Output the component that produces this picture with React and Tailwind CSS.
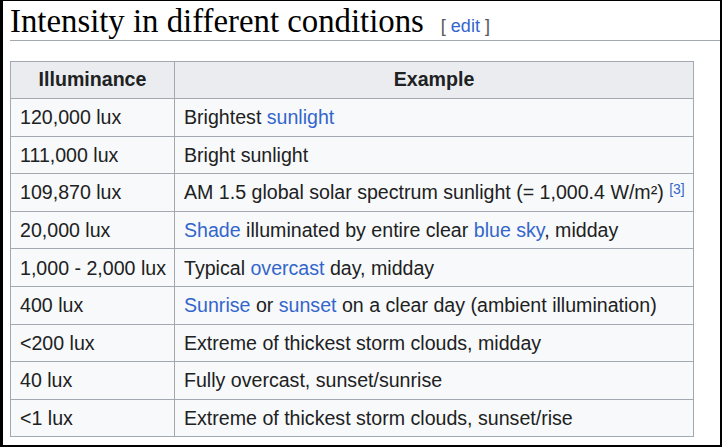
export default function App() {
  const link = "text-[#3366cc]";
  const rows = [
    ["120,000 lux", <>Brightest <span className={link}>sunlight</span></>],
    ["111,000 lux", <>Bright sunlight</>],
    ["109,870 lux", <>AM 1.5 global solar spectrum sunlight (= 1,000.4 W/m²) <sup className={`${link} text-[14px] relative -top-[5px]`}>[3]</sup></>],
    ["20,000 lux", <><span className={link}>Shade</span> illuminated by entire clear <span className={link}>blue sky</span>, midday</>],
    ["1,000 - 2,000 lux", <>Typical <span className={link}>overcast</span> day, midday</>],
    ["400 lux", <><span className={link}>Sunrise</span> or <span className={link}>sunset</span> on a clear day (ambient illumination)</>],
    ["<200 lux", <>Extreme of thickest storm clouds, midday</>],
    ["40 lux", <>Fully overcast, sunset/sunrise</>],
    ["<1 lux", <>Extreme of thickest storm clouds, sunset/rise</>],
  ];
  return (
    <div className="w-[722px] h-[447px] bg-white border-l-[3px] border-t border-r-2 border-b-2 border-black overflow-hidden text-[#202122]" style={{ fontFamily: '"Liberation Sans", Arial, sans-serif' }}>
      <div className="ml-[7px] flex items-baseline border-b border-[#a2a9b1] h-[40px]">
        <h2 className="text-[32.8px] leading-[40px] text-black" style={{ fontFamily: '"Liberation Serif", "Times New Roman", serif' }}>
          Intensity in different conditions
        </h2>
        <span className="ml-[17px] text-[18px] text-[#54595d]">
          [ <span className="text-[#3366cc]">edit</span> ]
        </span>
      </div>
      <table className="ml-[7px] mt-[20px] w-[684px] table-fixed border-collapse border border-[#a2a9b1] bg-[#f8f9fa] text-[19.6px]">
        <colgroup>
          <col className="w-[164px]" />
          <col />
        </colgroup>
        <thead>
          <tr className="bg-[#eaecf0]">
            <th className="border border-[#a2a9b1] h-[37px] font-bold text-center">Illuminance</th>
            <th className="border border-[#a2a9b1] h-[37px] font-bold text-center">Example</th>
          </tr>
        </thead>
        <tbody>
          {rows.map(([a, b], i) => (
            <tr key={i}>
              <td className="border border-[#a2a9b1] h-[37.6px] px-[9px] leading-[24px] whitespace-nowrap">{a}</td>
              <td className="border border-[#a2a9b1] h-[37.6px] pl-[9px] pr-0 leading-[24px] whitespace-nowrap">{b}</td>
            </tr>
          ))}
        </tbody>
      </table>
    </div>
  );
}
